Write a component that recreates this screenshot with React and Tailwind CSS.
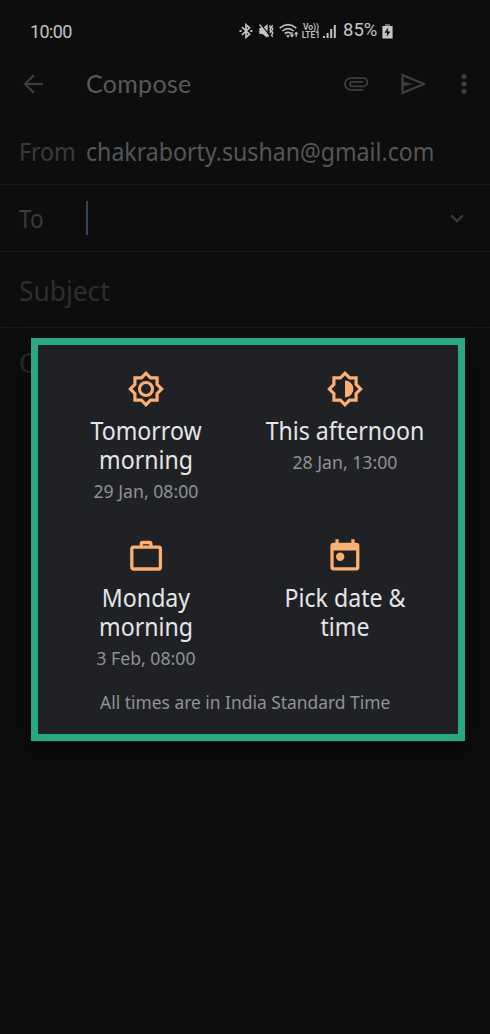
const SUN_OUTLINE =
  "M20 8.69V4h-4.69L12 .69 8.69 4H4v4.69L.69 12 4 15.31V20h4.69L12 23.31 15.31 20H20v-4.69L23.31 12 20 8.69zm-2 5.79V18h-3.52L12 20.48 9.52 18H6v-3.52L3.52 12 6 9.52V6h3.52L12 3.52 14.48 6H18v3.52L20.48 12 18 14.48z";

function MorningIcon() {
  return (
    <svg viewBox="0 0 24 24" className="h-[38px] w-[38px]">
      <path d={SUN_OUTLINE} fill="currentColor" />
      <circle cx="12" cy="12" r="4.1" fill="none" stroke="currentColor" strokeWidth="2" />
    </svg>
  );
}

function AfternoonIcon() {
  return (
    <svg viewBox="0 0 24 24" className="h-[38px] w-[38px]">
      <path d={SUN_OUTLINE} fill="currentColor" />
      <path d="M12 6.7v10.6a5.3 5.3 0 0 0 0-10.6z" fill="currentColor" />
    </svg>
  );
}

function BriefcaseIcon() {
  return (
    <svg viewBox="0 0 38 38" className="h-[38px] w-[38px]" fill="none" stroke="currentColor" strokeWidth="3.3">
      <rect x="4.8" y="10.2" width="28.6" height="21.8" rx="1.8" />
      <path d="M14.3 10.2V6.9q0-1.4 1.4-1.4h6.8q1.4 0 1.4 1.4v3.3" />
    </svg>
  );
}

function CalendarIcon() {
  return (
    <svg viewBox="0 0 38 38" className="h-[38px] w-[38px]" fill="currentColor">
      <path
        fillRule="evenodd"
        d="M9.4 2.3h3.3v3.4h12.6V2.3h3.3v3.4h1.6q3.2 0 3.2 3.2v21.4q0 3.2-3.2 3.2H7.6q-3.2 0-3.2-3.2V8.9q0-3.2 3.2-3.2h1.8zM7.7 13.6v16.6h22.4V13.6z"
      />
      <circle cx="14.2" cy="19.8" r="4.2" />
    </svg>
  );
}

const options = [
  { title: "Tomorrow morning", when: "29 Jan, 08:00", Icon: MorningIcon },
  { title: "This afternoon", when: "28 Jan, 13:00", Icon: AfternoonIcon },
  { title: "Monday morning", when: "3 Feb, 08:00", Icon: BriefcaseIcon },
  { title: "Pick date & time", when: null, Icon: CalendarIcon },
];

function StatusBar() {
  return (
    <div className="flex h-[62px] items-center pl-[30px] font-['Roboto',sans-serif] text-[#c4c4c4]">
      <span className="w-[209px] text-[18px] tracking-[-0.6px]">10:00</span>
      <svg viewBox="0 0 14 16" className="h-4 w-3.5" fill="none" stroke="currentColor" strokeWidth="1.7">
        <path d="M3 4.2l7.5 7L7 14.3V1.7l3.5 3.1L3 11.8" />
        <path d="M.5 8h2M11.3 8h2" strokeWidth="2" />
      </svg>
      <svg viewBox="0 0 15 16" className="ml-[6px] h-4 w-[15px]" fill="currentColor">
        <path d="M.3 5h3.2l4.8 5.8V15l-4.8-4H.3zM8.6 1v7.8L4.9 4.2z" />
        <path d="M.5 1.5l9.3 12" stroke="currentColor" strokeWidth="1.5" />
        <path d="M10.9 2.2v2l1 1-1 1.6 1 1.6-1 1.6M13.6 2.2l-1 1.8 1.2 2-1.2 2 1.2 2-1.2 2 1 2" fill="none" stroke="currentColor" strokeWidth="1.4" />
      </svg>
      <svg viewBox="0 0 20 16" className="ml-[5px] h-4 w-5" fill="none" stroke="currentColor" strokeWidth="1.6">
        <path d="M.7 5.2q8.3-7 16.6 0M3.3 8q5.7-4.6 11.4 0M5.8 10.6q3.2-2.4 6.2 0" />
        <path d="M7 12.3h4L9 14.7z" fill="currentColor" stroke="none" />
        <path d="M13 9v5M17.2 14V9.4" strokeWidth="1.2" />
        <path d="M10.9 11.5h4.2L13 14.5zM15 11.3h4.4L17.2 8.4z" fill="currentColor" stroke="none" />
      </svg>
      <span className="ml-[2px] w-[20px] text-center text-[8.5px] leading-[8px] font-semibold whitespace-normal">
        Vo)) LTE1
      </span>
      <svg viewBox="0 0 14 15" className="ml-[2px] h-[15px] w-3.5" fill="currentColor">
        <path d="M0 12h2v2H0zM3.6 9h2v5h-2zM7.2 5h2v9h-2zM10.8 1h2v13h-2z" />
      </svg>
      <span className="ml-[6px] w-[36px] text-[18.5px]">85%</span>
      <svg viewBox="0 0 11 15" className="ml-[3px] h-[15px] w-[11px]">
        <path d="M3 0h5v2H3z" fill="#6c6c6c" />
        <path d="M.4 2h10.2v12.5H.4z" fill="currentColor" />
        <path d="M6.3 3.5L2.5 8.8h2.6l-.5 4 3.9-5.4H5.8z" fill="#0d0d0d" />
      </svg>
    </div>
  );
}

function Toolbar() {
  return (
    <div className="flex h-[44px] items-center pl-[23px] text-[#3d3e3f]">
      <svg viewBox="0 0 20 20" className="h-5 w-5" fill="none" stroke="currentColor" strokeWidth="2.2">
        <path d="M20 10H2.5M10.8 1.3L2.1 10l8.7 8.7" />
      </svg>
      <h1 className="ml-[43px] w-[215px] font-['Lato',sans-serif] text-[25px] tracking-[0.3px] text-[#59595a]">
        Compose
      </h1>
      <svg viewBox="0 0 24 14" className="ml-[43px] h-3.5 w-6" fill="none" stroke="currentColor" strokeWidth="1.8">
        <path d="M19 12.8H6.8A5.8 5.8 0 0 1 6.8 1.1h12.5a4 4 0 0 1 0 8.2H8.2a2.1 2.1 0 0 1 0-4.4H19" />
      </svg>
      <svg viewBox="0 0 25 22" className="ml-[33px] h-[22px] w-[25px]" fill="none" stroke="currentColor" strokeWidth="2.2">
        <path d="M1.5 2v18l21.2-9z" />
        <path d="M2 8.7l10.5 2.3L2 13.3z" fill="currentColor" stroke="none" />
      </svg>
      <svg viewBox="0 0 6 20" className="ml-[35px] h-5 w-1.5" fill="currentColor">
        <circle cx="3" cy="2.7" r="2.5" />
        <circle cx="3" cy="10" r="2.5" />
        <circle cx="3" cy="17.3" r="2.5" />
      </svg>
    </div>
  );
}

function ComposeForm() {
  return (
    <div className="flex flex-col">
      <div className="flex h-[79px] items-center border-b border-[#1b1b1c] pt-[14px] pl-[19px] text-[25px]">
        <span className="w-[67px] origin-left scale-x-[0.925] text-[#3a3b3c]">From</span>
        <span className="origin-left scale-x-[0.925] text-[#555657]">chakraborty.sushan@gmail.com</span>
      </div>
      <div className="flex h-[67px] items-center border-b border-[#1b1b1c] pl-[19px] text-[25px] text-[#3a3b3c]">
        <span className="w-[67px] origin-left scale-x-[0.9] pt-[2px]">To</span>
        <span className="h-[34px] w-[2px] bg-[#34465f]" />
        <svg viewBox="0 0 14 9" className="mr-[26px] ml-auto h-[9px] w-3.5" fill="none" stroke="currentColor" strokeWidth="2.3">
          <path d="M1 1.2l6 6 6-6" />
        </svg>
      </div>
      <div className="flex h-[76px] items-center border-b border-[#1b1b1c] pl-[19px] text-[28px] text-[#2d2e30]">
        <span className="origin-left scale-x-[0.94]">Subject</span>
      </div>
      <div className="flex h-[68px] items-center pl-[19px] text-[28px] text-[#2d2e30]">
        <span className="origin-left scale-x-[0.94]">Compose email</span>
      </div>
    </div>
  );
}

function ScheduleOption({ title, when, Icon }) {
  return (
    <li className="flex h-[167px] flex-col items-center">
      <span className="text-[#fbaf73]">
        <Icon />
      </span>
      <span className="mt-[8px] w-[178px] scale-x-[0.925] text-center text-[25px] leading-[29px] whitespace-normal text-[#e4e6e9]">
        {title}
      </span>
      {when && (
        <span className="mt-[4px] scale-x-[0.955] text-[18.5px] leading-[26px] text-[#8f9296]">{when}</span>
      )}
    </li>
  );
}

function ScheduleDialog() {
  return (
    <div className="absolute top-[338px] left-[31px] h-[403px] w-[434px] border-7 border-[#29a97f] bg-[#202124] shadow-[0_2px_0_-1px_#16231f,0_10px_24px_rgba(0,0,0,0.6)]">
      <ul className="grid grid-cols-2 pt-[25px] pr-[14px] pl-[9px]">
        {options.map((option) => (
          <ScheduleOption key={option.title} {...option} />
        ))}
      </ul>
      <p className="-mt-[15px] scale-x-[0.94] pr-[6px] text-center text-[18.5px] leading-[26px] text-[#8f9296]">
        All times are in India Standard Time
      </p>
    </div>
  );
}

export default function App() {
  return (
    <div className="relative h-[1034px] w-[490px] overflow-hidden bg-[#0d0d0d] font-['Noto_Sans',sans-serif] whitespace-nowrap">
      <StatusBar />
      <Toolbar />
      <ComposeForm />
      <ScheduleDialog />
    </div>
  );
}
